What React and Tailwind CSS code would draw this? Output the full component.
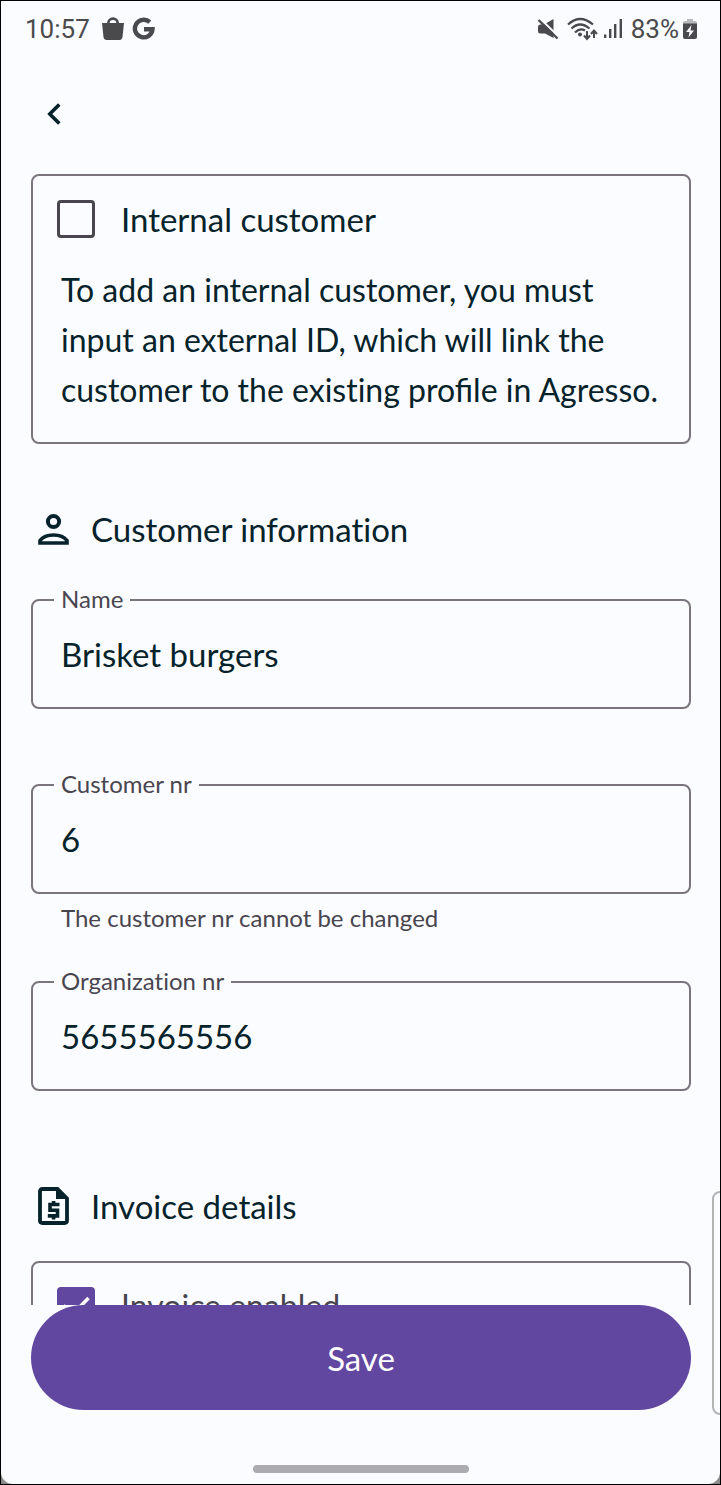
import { useState } from "react";

function StatusBar() {
  return (
    <header className="flex h-14 shrink-0 items-center justify-between pl-6 pr-[23px] font-[Roboto,sans-serif] text-[26px] leading-8 text-[#4a4a4c]">
      <div className="flex items-center gap-3">
        <span>10:57</span>
        <div className="flex items-center gap-2">
          <svg className="h-6 w-[22px]" viewBox="0 0 22 24" fill="currentColor" aria-hidden="true">
            <path d="M5 8V6.3a6 6 0 0 1 12 0V8h-2.600V6.300a3.400 3.400 0 0 0-6.800 0V8z" />
            <path d="M0 6h22l-1.500 14q-.4 3-3.200 3H4.700q-2.800 0-3.200-3z" />
          </svg>
          <svg className="h-6 w-6" viewBox="0 0 24 24" fill="none" stroke="currentColor" strokeWidth="4.400" aria-hidden="true">
            <path d="M17.800 5.200A8.800 8.800 0 1 0 20.500 12.200H12" />
          </svg>
        </div>
      </div>
      <div className="flex items-center gap-[5px]">
        <div className="flex items-center gap-2">
          <svg className="h-[22px] w-[22px]" viewBox="0 0 22 22" aria-hidden="true">
            <path d="M1 9q0-2.500 2.500-2.500H7L16.500 1v19L8 15.500H3.500Q1 15.500 1 13z" fill="currentColor" />
            <path d="M4 1.500l17 16.500" stroke="#fbfcff" strokeWidth="2" />
            <path d="M1.500 2l19 18.500" stroke="currentColor" strokeWidth="2.400" />
          </svg>
          <svg className="h-6 w-[31px]" viewBox="0 0 31 24" fill="none" stroke="currentColor" strokeWidth="2.200" aria-hidden="true">
            <path d="M1 7.500Q13 -3.500 26 7.500M4.500 11.500Q13 3.500 22.500 11.500M8 15.500Q13 10.500 18 13.500" />
            <circle cx="13" cy="17.500" r="2" fill="currentColor" stroke="none" />
            <path d="M20 14v7.500M17 18.500l3 3.500 3-3.500M27 21v-7M24 17l3-3.500 3 3.500" strokeWidth="2" />
          </svg>
        </div>
        <svg className="h-5 w-5" viewBox="0 0 20 20" fill="none" stroke="currentColor" strokeWidth="2.400" aria-hidden="true">
          <path d="M2.200 15.500v3.500M7.200 10v9M12.200 5v14M17.800 0v19" />
        </svg>
        <div className="flex items-center gap-1 pl-[3px]">
          <span>83%</span>
          <svg className="h-5 w-3.5" viewBox="0 0 14 20" aria-hidden="true">
            <path d="M4 0h6v2h2q2 0 2 2v2H0V4q0-2 2-2h2z" fill="#b9b9bc" />
            <path d="M0 4.500h14v13.500q0 2-2 2H2q-2 0-2-2z" fill="currentColor" />
            <path d="M8.500 6L3 13h3.500L5.500 18.500 11 11.500H7.500z" fill="#fbfcff" />
          </svg>
        </div>
      </div>
    </header>
  );
}

function PersonIcon() {
  return (
    <svg className="h-[38px] w-[31px]" viewBox="0 -1 31 38" fill="none" stroke="currentColor" strokeWidth="4" aria-hidden="true">
      <circle cx="15.500" cy="10.500" r="5.600" />
      <path d="M2 32V29.500C5 25.600 10 24 15.500 24S26 25.600 29 29.500V32z" strokeWidth="3.600" />
    </svg>
  );
}

function InvoiceIcon() {
  return (
    <svg className="h-[38px] w-[31px]" viewBox="0 0 31 38" fill="none" aria-hidden="true">
      <path d="M19.500 2H4.500Q2 2 2 4.500v29Q2 36 4.500 36h22q2.500 0 2.500-2.500V11.500z" stroke="currentColor" strokeWidth="3.800" />
      <path d="M18 1l12 11H18z" fill="currentColor" />
      <path d="M21.500 17.500H12v5.700H19.500v5.700H9.800M15.600 14v4M15.600 28.500v4" stroke="currentColor" strokeWidth="3.600" />
    </svg>
  );
}

function SectionTitle({ icon, children }) {
  return (
    <h2 className="flex items-center gap-[22px] pl-[7px] text-[33px] leading-[50px]">
      {icon}
      {children}
    </h2>
  );
}

function Checkbox({ id, label, defaultChecked = false, muted = false }) {
  return (
    <div className="flex items-center gap-[26px] pl-6">
      <span className="grid">
        <input
          id={id}
          type="checkbox"
          defaultChecked={defaultChecked}
          className="peer col-start-1 row-start-1 size-[38px] appearance-none rounded-[4px] border-3 border-[#49454f] checked:border-[#6247a0] checked:bg-[#6247a0]"
        />
        <svg
          className="pointer-events-none invisible col-start-1 row-start-1 size-[38px] text-white peer-checked:visible"
          viewBox="0 0 38 38"
          fill="none"
          stroke="currentColor"
          strokeWidth="3.500"
          aria-hidden="true"
        >
          <path d="M6.500 18.500l9 9L31.500 11" />
        </svg>
      </span>
      <label htmlFor={id} className={muted ? "text-[32px] text-[#49454f]" : undefined}>
        {label}
      </label>
    </div>
  );
}

function TextField({ id, label, initialValue, readOnly = false, helper }) {
  const [value, setValue] = useState(initialValue);
  return (
    <div>
      <fieldset className="rounded-lg border-2 border-[#79747e] px-[21px] pb-7 pt-3.5">
        <legend className="px-[7px] pb-0.5 text-2xl leading-7 text-[#49454f]">
          <label htmlFor={id}>{label}</label>
        </legend>
        <input
          id={id}
          type="text"
          value={value}
          readOnly={readOnly}
          aria-describedby={helper ? id + "-helper" : undefined}
          onChange={(e) => setValue(e.target.value)}
          className="block h-[50px] w-full bg-transparent px-[7px] text-[33px] leading-[50px] outline-none"
        />
      </fieldset>
      {helper && (
        <p id={id + "-helper"} className="px-[30px] pt-2.5 text-2xl leading-7 text-[#49454f]">
          {helper}
        </p>
      )}
    </div>
  );
}

export default function App() {
  return (
    <div className="h-screen border border-black bg-[#8a8a8a] font-[Lato,sans-serif] text-[33px] leading-[50px] text-[#06232b] [font-variant-ligatures:no-common-ligatures]">
      <div className="relative flex h-full flex-col overflow-hidden rounded-b-xl bg-[#fbfcff]">
        <StatusBar />
        <nav className="flex h-[117px] shrink-0 items-center px-[29px] pb-1">
          <button type="button" aria-label="Back" className="grid size-12 place-items-center">
            <svg className="h-[22px] w-3.5" viewBox="0 0 14 22" fill="none" stroke="currentColor" strokeWidth="3.600" aria-hidden="true">
              <path d="M12.300 1.500L2.800 11l9.500 9.500" />
            </svg>
          </button>
        </nav>

        <main className="flex min-h-0 flex-1 flex-col overflow-y-auto pl-[30px] pr-[29px] [scrollbar-width:none]">
          <section className="rounded-lg border-2 border-[#79747e] pb-[27px] pt-[18px]">
            <Checkbox id="internal" label="Internal customer" />
            <p className="px-7 pt-[21px] text-[32px]">
              To add an internal customer, you must input an external ID, which will link the customer to the existing{" "}
              <span className="[font-variant-ligatures:common-ligatures]">profile</span> in Agresso.
            </p>
          </section>

          <section className="pt-[60px]">
            <SectionTitle icon={<PersonIcon />}>Customer information</SectionTitle>
            <div className="pt-[31px]">
              <TextField id="name" label="Name" initialValue="Brisket burgers" />
            </div>
            <div className="pt-[61px]">
              <TextField
                id="customer-nr"
                label="Customer nr"
                initialValue="6"
                readOnly
                helper="The customer nr cannot be changed"
              />
            </div>
            <div className="pt-[35px]">
              <TextField id="organization-nr" label="Organization nr" initialValue="5655565556" />
            </div>
          </section>

          <section className="pt-[90px]">
            <SectionTitle icon={<InvoiceIcon />}>Invoice details</SectionTitle>
            <div className="mt-[30px] rounded-lg border-2 border-[#79747e] py-[18px]">
              <Checkbox id="invoice-enabled" label="Invoice enabled" defaultChecked muted />
            </div>
          </section>
        </main>

        <footer className="flex shrink-0 flex-col items-center pb-[11px] pl-[30px] pr-[29px]">
          <button type="submit" className="h-[105px] w-full rounded-full bg-[#6247a0] text-white">
            Save
          </button>
          <div className="mt-[55px] h-2 w-[216px] rounded-full bg-[#acacae]" />
        </footer>

        <div className="absolute -right-1 bottom-[69px] h-56 w-3 rounded-l-lg border-2 border-[#b2b4b4] bg-[#fbfcff]" />
      </div>
    </div>
  );
}
